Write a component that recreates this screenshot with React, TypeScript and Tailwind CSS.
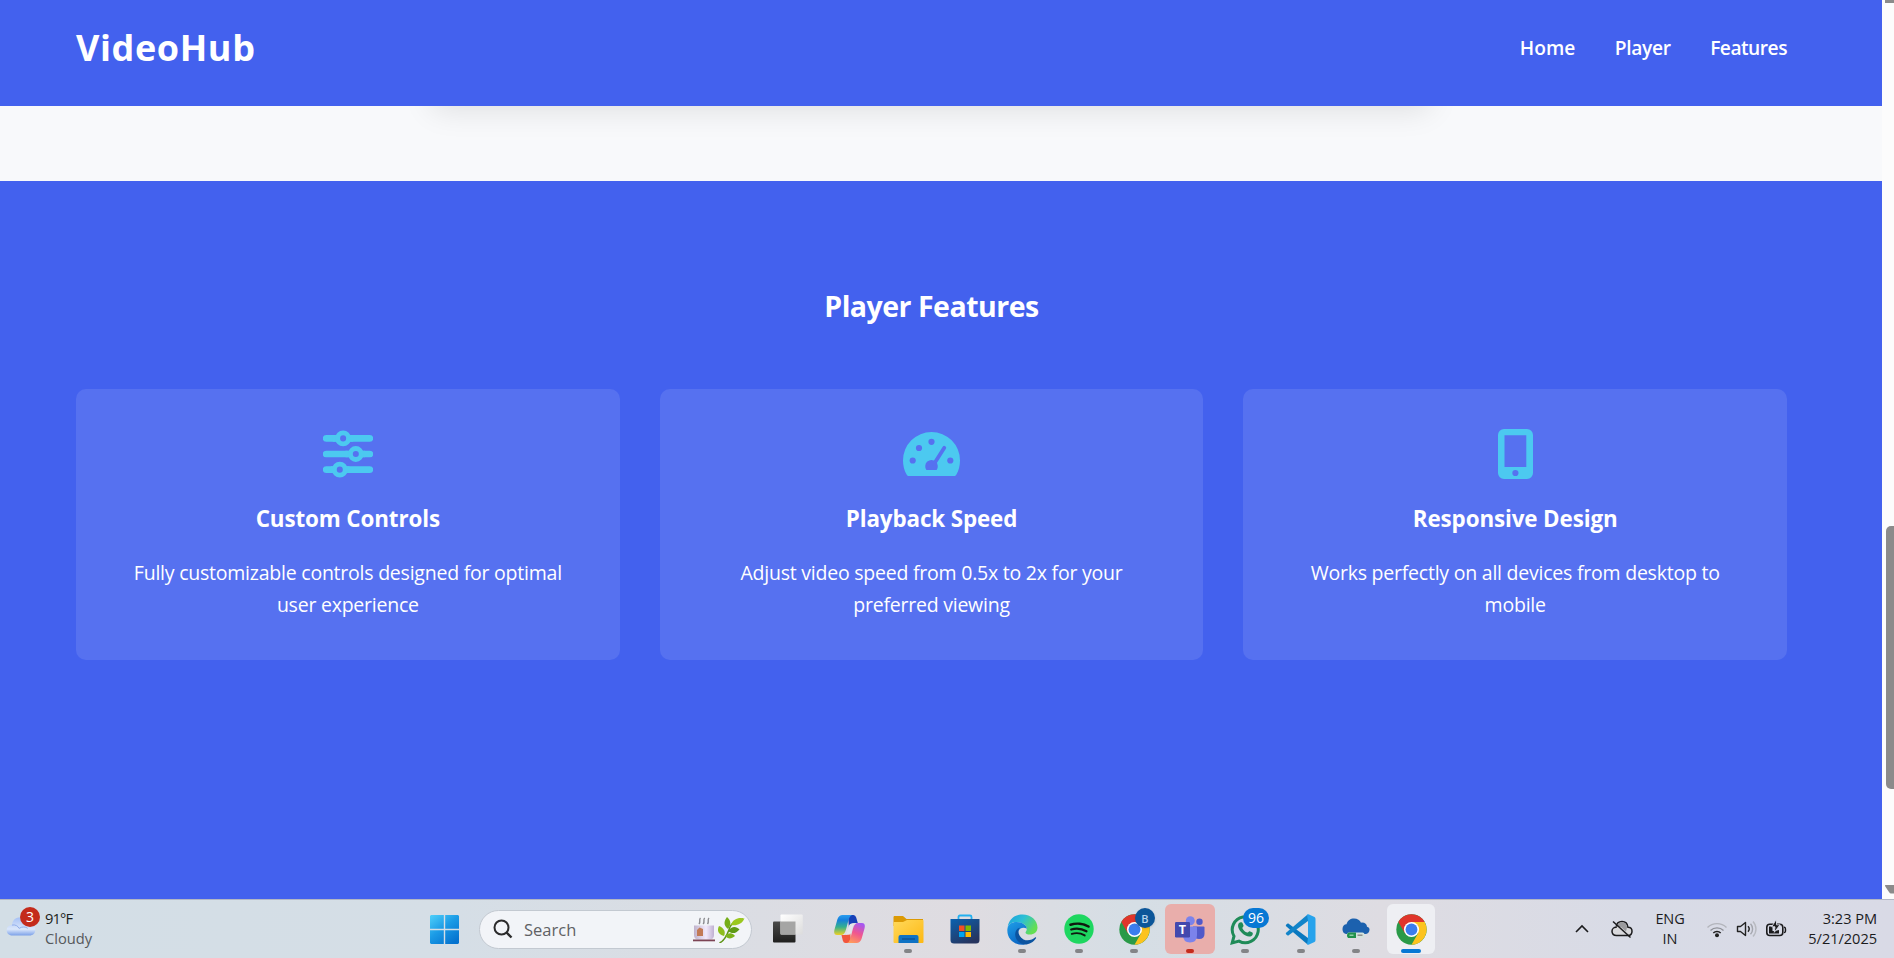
import type { ReactNode } from "react";

function SlidersIcon() {
  return (
    <svg className="h-[50px] w-[50px]" viewBox="0 0 512 512" fill="none" stroke="#4cc9f0" strokeLinecap="round">
      <path strokeWidth="68" d="M32 96H120M290 96H480M32 256H250M420 256H480M32 416H90M254 416H480" />
      <path strokeWidth="68" strokeLinecap="butt" d="M100 96H148M264 96H310M230 256H278M394 256H430M80 416H114M230 416H270" />
      <circle cx="206" cy="96" r="56" strokeWidth="50" />
      <circle cx="336" cy="256" r="56" strokeWidth="50" />
      <circle cx="172" cy="416" r="56" strokeWidth="50" />
    </svg>
  );
}

function GaugeIcon() {
  return (
    <svg className="h-[44px] w-[57px]" viewBox="0 0 57 44">
      <path d="M28.500 0A28.500 28.500 0 0 0 0 28.500C0 33.700 1.300 38.600 3.600 42.500C4.200 43.500 5 44 6.300 44H50.700C52 44 52.800 43.500 53.400 42.500C55.700 38.600 57 33.700 57 28.500A28.500 28.500 0 0 0 28.500 0Z" fill="#4cc9f0" />
      <g fill="#5671f0">
        <circle cx="9.700" cy="28.500" r="3.100" />
        <circle cx="16" cy="16" r="3.100" />
        <circle cx="28.500" cy="9.800" r="3.100" />
        <circle cx="47.300" cy="28.500" r="3.100" />
        <path d="M23.400 38A6.300 6.300 0 1 1 33.600 38Z" />
      </g>
      <path d="M41.300 15.800L31 32" stroke="#5671f0" strokeWidth="3.800" strokeLinecap="round" />
    </svg>
  );
}

function MobileIcon() {
  return (
    <svg className="h-[50px] w-[35px]" viewBox="0 0 35 50">
      <path
        fill="#4cc9f0"
        fillRule="evenodd"
        d="M6 0H29A6 6 0 0 1 35 6V44A6 6 0 0 1 29 50H6A6 6 0 0 1 0 44V6A6 6 0 0 1 6 0ZM6.5 6.3V38H28.3V6.3ZM17.4 40.9A3.1 3.1 0 1 0 17.4 47.1A3.1 3.1 0 1 0 17.4 40.9Z"
      />
    </svg>
  );
}

function Card({ icon, title, text }: { icon: ReactNode; title: string; text: string }) {
  return (
    <div className="flex flex-1 flex-col items-center rounded-[10px] bg-white/10 px-12 pt-10 pb-8 text-center">
      <div className="flex h-[50px] flex-none items-center">{icon}</div>
      <h3 className="mt-[22px] h-9 flex-none text-[22.4px] leading-9 font-bold tracking-[-0.12px]">{title}</h3>
      <p className="mt-5 flex-none text-[19.5px] leading-8 tracking-[-0.23px] text-white">{text}</p>
    </div>
  );
}

function StartIcon() {
  return (
    <svg className="h-[29px] w-[29px]" viewBox="0 0 29 29">
      <defs>
        <linearGradient id="start" gradientUnits="userSpaceOnUse" x1="0" y1="0" x2="22" y2="29">
          <stop offset="0" stopColor="#4fd0fa" />
          <stop offset=".5" stopColor="#1b9be6" />
          <stop offset="1" stopColor="#0573cf" />
        </linearGradient>
      </defs>
      <path fill="url(#start)" d="M1 0H13.8V13.8H0V1ZM15.2 0H28L29 1V13.8H15.2ZM0 15.2H13.8V29H1L0 28ZM15.2 15.2H29V28L28 29H15.2Z" />
    </svg>
  );
}

function TeaIcon() {
  return (
    <svg className="h-[27px] w-[53px]" viewBox="0 0 53 27">
      <defs>
        <linearGradient id="cup" x1="0" y1="0" x2="1" y2="0">
          <stop offset="0" stopColor="#bfb2cc" />
          <stop offset=".6" stopColor="#f1e9fb" />
          <stop offset="1" stopColor="#c0b0d2" />
        </linearGradient>
      </defs>
      <g fill="none" stroke="#8b8b90" strokeWidth="1.4">
        <path d="M8.500 2C6.500 4 9 5 7 8M12.700 2C10.700 4 13.200 5 11.200 8M17 2C15 4 17.500 5 15.500 8" />
      </g>
      <path d="M2 9.500H22V19Q22 23.500 17 23.500H7Q2 23.500 2 19Z" fill="url(#cup)" />
      <path d="M5 14L7.500 11.500L11 13V20H5Z" fill="#c27a56" />
      <path d="M1 23.500H23V25.300H1Z" fill="#7c4455" />
      <path d="M27.500 27C34 24 36 16 38 11C40 7 45 4 51 3" fill="none" stroke="#5d9416" strokeWidth="1.500" />
      <path d="M36 13C31 9 32 5 35 1C39.500 5 39 9 36 13Z" fill="#75ad19" />
      <path d="M39 9C41 2.500 47 1 52.500 2.500C50 8 45 10 39 9Z" fill="#9bc81f" />
      <path d="M32 20C25.500 18 25 14 27 10C32 12 34 16 32 20Z" fill="#8dbd1c" />
      <path d="M36 15C40 9.500 44.500 10.500 47.500 13.500C43.500 18 40 18 36 15Z" fill="#5e9a16" />
      <path d="M33 20C37 16 40.500 17 43 20C39 23.500 36 23 33 20Z" fill="#7cb31a" />
    </svg>
  );
}

function TaskViewIcon() {
  return (
    <svg className="h-[30px] w-[30px]" viewBox="0 0 30 30">
      <defs>
        <linearGradient id="tv1" x1="0" y1="0" x2="0" y2="1">
          <stop offset="0" stopColor="#4a4a49" />
          <stop offset="1" stopColor="#1f1f1e" />
        </linearGradient>
        <linearGradient id="tv2" x1="0" y1="0" x2="1" y2="1">
          <stop offset="0" stopColor="#ffffff" />
          <stop offset="1" stopColor="#dcdcdc" />
        </linearGradient>
      </defs>
      <rect x="0" y="7.500" width="22.500" height="21" rx="1" fill="url(#tv1)" />
      <rect x="7.500" y=".5" width="22.300" height="20" rx="1" fill="url(#tv2)" />
      <rect x="7.500" y="7.500" width="15" height="13" fill="#a5a5a4" />
    </svg>
  );
}

function CopilotIcon() {
  return (
    <svg className="h-[28px] w-[31px]" viewBox="0 0 31 28">
      <defs>
        <linearGradient id="cp1" x1="0" y1="0" x2="0" y2="1">
          <stop offset="0" stopColor="#2a9df0" />
          <stop offset=".25" stopColor="#1580dc" />
          <stop offset=".6" stopColor="#35b08e" />
          <stop offset="1" stopColor="#f0d022" />
        </linearGradient>
        <linearGradient id="cp2" x1=".7" y1="0" x2=".3" y2="1">
          <stop offset="0" stopColor="#a558f2" />
          <stop offset=".5" stopColor="#f0568f" />
          <stop offset="1" stopColor="#ff9a5c" />
        </linearGradient>
      </defs>
      <path d="M14 0H19.500Q21.500 0 22.200 2.500L23.800 8H20Q17.500 8 16.500 10L15 14Z" fill="#1640b8" />
      <path d="M17 28H11.500Q9.500 28 8.800 25.500L7.500 20H11Q13.500 20 14.500 18L16 14Z" fill="#f2553c" />
      <path d="M8.500 0H18Q15.800 .8 14.800 4L12 14.500Q10.500 20 7 20H3Q-.8 20 .5 14.500L3.500 4Q5 0 8.500 0Z" fill="url(#cp1)" />
      <path d="M22.500 28H13Q15.200 27.200 16.200 24L19 13.500Q20.500 8 24 8H28Q31.800 8 30.500 13.500L27.500 24Q26 28 22.500 28Z" fill="url(#cp2)" />
      <path d="M17.800 8.500H20.500Q19.200 9.700 18.500 12L16.800 18.500Q16.200 19.800 14.500 19.800H11.500Q12.800 18.500 13.300 16.500L15 10.500Q15.800 8.500 17.800 8.500Z" fill="#e3e4ea" />
    </svg>
  );
}

function FolderIcon() {
  return (
    <svg className="h-[27px] w-[31px]" viewBox="0 0 31 27">
      <defs>
        <linearGradient id="fd" x1="0" y1="0" x2="1" y2="1">
          <stop offset="0" stopColor="#ffd95b" />
          <stop offset="1" stopColor="#fdb813" />
        </linearGradient>
      </defs>
      <path d="M1 0H10L13.500 3H30V10H.5V1Z" fill="#dc9a04" />
      <path d="M.5 6H10L14 4H30Q30.500 4 30.500 5V26Q30.500 27 29.500 27H1.500Q.5 27 .5 26Z" fill="url(#fd)" />
      <path d="M5.500 27V21Q5.500 19 7.500 19H23.500Q25.500 19 25.500 21V27Z" fill="#0f72c4" />
      <path d="M9 23H22" stroke="#0a4d90" strokeWidth="1.200" />
    </svg>
  );
}

function StoreIcon() {
  return (
    <svg className="h-[30px] w-[30px]" viewBox="0 0 30 30">
      <defs>
        <linearGradient id="st" x1="0" y1="0" x2=".6" y2="1">
          <stop offset="0" stopColor="#0a62b0" />
          <stop offset="1" stopColor="#27355f" />
        </linearGradient>
      </defs>
      <path d="M8.500 6V3Q8.500 1.500 10 1.500H20Q21.500 1.500 21.500 3V6" fill="none" stroke="#22b0f0" strokeWidth="1.800" />
      <path d="M.5 5H29.500V26Q29.500 29.500 26 29.500H4Q.5 29.500 .5 26Z" fill="url(#st)" />
      <path d="M9 11.500H14.500V17H9Z" fill="#f25022" />
      <path d="M15.500 11.500H21V17H15.500Z" fill="#7fba00" />
      <path d="M9 18H14.500V23H9Z" fill="#00a4ef" />
      <path d="M15.500 18H21V23H15.500Z" fill="#ffb900" />
    </svg>
  );
}

function EdgeIcon() {
  return (
    <svg className="h-[31px] w-[31px]" viewBox="0 0 31 31">
      <defs>
        <linearGradient id="eg1" x1="0" y1="0" x2="1" y2=".5">
          <stop offset="0" stopColor="#1a9ede" />
          <stop offset=".5" stopColor="#2cbfd5" />
          <stop offset="1" stopColor="#64df53" />
        </linearGradient>
        <linearGradient id="eg2" x1="0" y1="0" x2=".5" y2="1">
          <stop offset="0" stopColor="#1f9fe8" />
          <stop offset="1" stopColor="#0a66c4" />
        </linearGradient>
      </defs>
      <path d="M.6 13C2 5 8 .4 15.500 .4C24 .4 30.500 6 30.500 13.500C30.500 18 27 20.500 23 20.500C20 20.500 18.500 19.500 18.500 18.700C18.500 18 19.800 17 19.800 14.800C19.800 11 15 8 9.500 8C5 8 1.800 10 .6 13Z" fill="url(#eg1)" />
      <path d="M.4 15C.8 10.500 4.500 8 9.500 8C15.500 8 19.800 11.500 19.800 14.800C17 12.500 12 14 11 18C9.800 23 13 29 18 30.400C8 32 -.5 25 .4 15Z" fill="url(#eg2)" />
      <path d="M13.500 13.500C10 15.500 11 22.500 16.500 25.500C21 27.500 26 25.500 28 23.500C29 22.700 29.500 23.500 28.800 24.500C26.500 28 22.500 30.500 17.800 30.600C11 29.500 7.500 24 8.300 19C9 15.500 11 14 13.500 13.500Z" fill="#0c54a0" />
    </svg>
  );
}

function SpotifyIcon() {
  return (
    <svg className="h-[30px] w-[30px]" viewBox="0 0 30 30">
      <circle cx="15" cy="15" r="14.700" fill="#1ed760" />
      <g fill="none" stroke="#10180f" strokeLinecap="round">
        <path d="M6.500 10.700C12 9 19.500 9.500 24.500 12.500" strokeWidth="2.600" />
        <path d="M7.200 15.500C12 14 18 14.700 22.500 17.300" strokeWidth="2.200" />
        <path d="M7.800 19.900C12 18.700 17 19.200 20.700 21.400" strokeWidth="1.900" />
      </g>
    </svg>
  );
}

function ChromeIcon() {
  return (
    <svg className="h-[31px] w-[31px]" viewBox="0 0 48 48">
      <circle cx="24" cy="24" r="23.500" fill="#2a9a48" />
      <path d="M44.350 12.250A23.500 23.500 0 0 1 24 47.500L34.200 29.800L33 12.250Z" fill="#fcc31e" />
      <path d="M24 12.250H44.350V24H24Z" fill="#fcc31e" />
      <path d="M3.650 12.250L13.800 29.900L24 24V12.250H44.350A23.500 23.500 0 0 0 3.650 12.250Z" fill="#e0352b" />
      <circle cx="24" cy="24" r="11.700" fill="#fff" />
      <circle cx="24" cy="24" r="9.200" fill="#3b7ded" />
    </svg>
  );
}

function TeamsIcon() {
  return (
    <svg className="h-[27px] w-[31px]" viewBox="0 0 31 27">
      <circle cx="25.500" cy="5.700" r="3.200" fill="#5059c9" />
      <path d="M19 10.500H29.500Q30.500 10.500 30.500 11.500V18Q30.500 23 25 23Q21 23 19 20Z" fill="#5059c9" />
      <circle cx="16.300" cy="4.700" r="4.500" fill="#7b83eb" />
      <path d="M9 10.500H22Q23 10.500 23 11.500V19Q23 26.500 16 26.500Q9 26.500 9 19Z" fill="#7b83eb" />
      <rect x="1" y="6" width="15" height="15.500" rx="1.200" fill="#4349ae" />
      <text x="8.400" y="18.300" textAnchor="middle" fill="#fff" className="font-['Open_Sans',sans-serif] text-[12.5px] font-bold">T</text>
    </svg>
  );
}

function WhatsAppIcon() {
  return (
    <svg className="h-[31px] w-[31px]" viewBox="0 0 31 31">
      <path d="M2.200 28.900L4 22.200A13 13 0 1 1 9 27.100Z" fill="none" stroke="#1f8b58" strokeWidth="3" />
      <path d="M10.800 8.300C11.700 8 12.300 8.500 12.600 9.300L13.500 11.500C13.800 12.500 12.200 13.500 12.400 14.200C13.500 16.300 15 17.700 17.200 18.600C18 18.800 18.900 16.900 19.700 17.200L22.400 18.500C23.300 19.100 22.700 21.200 21.500 22C19 23.500 15 22 12 19C9 16 7.300 12.500 8.400 10C8.900 9 9.700 8.500 10.800 8.300Z" fill="#1f8b58" />
    </svg>
  );
}

function VSCodeIcon() {
  return (
    <svg className="h-[31px] w-[31px]" viewBox="0 0 31 31">
      <path d="M1 10.800L3 9.200L23 24V30.500L22 30L.8 12Z" fill="#0a78bf" />
      <path d="M1 20.200L3 21.800L23 7V.5L22 1L.8 19Z" fill="#1284c9" />
      <path d="M22 .8Q23 0 24 .5L29.500 3Q30.500 3.500 30.500 5V26Q30.500 27.500 29.500 28L24 30.500Q23 31 22 30.200L23 24V7Z" fill="#27a3ec" />
    </svg>
  );
}

function CloudServerIcon() {
  return (
    <svg className="h-[22px] w-[28px]" viewBox="0 0 28 22">
      <path d="M5.500 16C2 16 .5 14 .5 11C.5 8 2.500 6.200 4.500 6.300C5.500 2.500 8.500 .5 12 .5C15.500 .5 18 2.300 19 4.700C22.500 4.200 25 6.200 25 8.700C27 9.200 27.700 10.500 27.500 12C27.200 14.500 25.500 16 23.500 16Z" fill="#1c61ae" />
      <rect x="5" y="14.500" width="17.500" height="5.500" rx="2" fill="#d5e4dd" />
      <path d="M7 14.500H14V20H7Q5 20 5 17.200Q5 14.500 7 14.500Z" fill="#20924c" />
      <path d="M7.500 17.200H11.500" stroke="#a9dcbc" strokeWidth="1.200" />
      <path d="M15.500 17.200H20.500" stroke="#888" strokeWidth="1.400" />
    </svg>
  );
}

function AppTile({
  children,
  tile = "",
  dot = "",
}: {
  children: ReactNode;
  tile?: string;
  dot?: string;
}) {
  return (
    <div className={`relative flex h-[50px] flex-none items-center justify-center rounded-md ${tile || "w-[50px]"}`}>
      {children}
      {dot && <span className={`absolute bottom-[1px] left-1/2 h-1 -translate-x-1/2 rounded-full ${dot}`} />}
    </div>
  );
}

const GRAY_DOT = "w-2 bg-[#838487]";

function Weather() {
  return (
    <div className="flex w-[430px] flex-none items-center pl-1.5">
      <div className="relative h-[30px] w-[30px]">
        <svg className="mt-[2px] h-[20px] w-[30px]" viewBox="0 0 30 21">
          <defs>
            <linearGradient id="cl" x1="0" y1="0" x2="0" y2="1">
              <stop offset="0" stopColor="#a6c0f5" />
              <stop offset=".65" stopColor="#dbe7fb" />
              <stop offset="1" stopColor="#7ba0e8" />
            </linearGradient>
          </defs>
          <path d="M6 20.500C2 20.500 0 18 0 15C0 12 2 9.500 5.500 9.500C6 4 9.500 1.500 13.500 1.500C18 1.500 20.500 4 21.500 8C27 7.500 30 10.500 30 14.500C30 18.500 27.500 20.500 24 20.500Z" fill="url(#cl)" />
          <path d="M5.500 9.500C9 8.800 12 10.500 13 13C16 11 20 11 22 13" fill="none" stroke="#8eace9" strokeWidth="1" />
        </svg>
        <span className="absolute -top-[7px] left-[14px] flex h-5 w-5 items-center justify-center rounded-full bg-[#c42b1c] text-[14px] leading-none text-white">
          3
        </span>
      </div>
      <div className="mb-0.5 ml-[9px] text-[14.7px] leading-5">
        <div className="tracking-[-0.9px] text-[#1c1e20]">91°F</div>
        <div className="text-[#56595c]">Cloudy</div>
      </div>
    </div>
  );
}

function Tray() {
  return (
    <div className="ml-auto flex h-full items-center pr-[17px] text-[#1b1b1d]">
      <svg className="h-3 w-3.5" viewBox="0 0 14 12" fill="none" stroke="currentColor" strokeWidth="1.600">
        <path d="M1 9L7 3L13 9" />
      </svg>
      <svg className="ml-[22px] h-5 w-[22px]" viewBox="0 0 22 20">
        <path d="M5.500 16.500C2.500 16.500 1 14.500 1 12.300C1 10 2.800 8.300 5 8.300C5.500 4.500 8 2.500 11 2.500C14 2.500 16.500 4.500 17 8.300C19.500 8.300 21 10 21 12.300C21 14.800 19.300 16.500 17 16.500Z" fill="#d9d9dc" stroke="currentColor" strokeWidth="1.500" />
        <path d="M5.500 8C6 5 8.500 3.300 11 3.300C13.500 3.300 15.700 5 16.200 8L15 12.500L10 8Z" fill="#9b9b9e" />
        <path d="M2 2.500L19.500 18.500" stroke="currentColor" strokeWidth="1.500" />
      </svg>
      <div className="ml-[22px] w-[30px] text-center text-[14.5px] leading-5 tracking-[-0.1px]">
        <div>ENG</div>
        <div>IN</div>
      </div>
      <svg className="ml-[21px] h-5 w-[22px]" viewBox="0 0 22 20" fill="none">
        <path d="M1.500 8.500A13.500 13.500 0 0 1 20.500 8.500" stroke="#b3b5bc" strokeWidth="1.400" />
        <path d="M4.500 11.500A9.300 9.300 0 0 1 17.500 11.500" stroke="#8f9198" strokeWidth="1.400" />
        <path d="M7.300 14A5.300 5.300 0 0 1 14.700 14" stroke="#222" strokeWidth="1.500" />
        <circle cx="11" cy="16.200" r="2" fill="#222" />
      </svg>
      <svg className="ml-[8px] h-5 w-[22px]" viewBox="0 0 22 20" fill="none" strokeWidth="1.400">
        <path d="M1.500 7.500H4.500L9.500 3.500V16.500L4.500 12.500H1.500Z" stroke="#222" strokeLinejoin="round" />
        <path d="M12 7.300A4 4 0 0 1 12 12.700" stroke="#222" />
        <path d="M14.500 4.800A7.500 7.500 0 0 1 14.500 15.200" stroke="#a3a5ac" />
        <path d="M17 2.500A11 11 0 0 1 17 17.500" stroke="#b8bac0" />
      </svg>
      <svg className="ml-[7px] h-5 w-[22px]" viewBox="0 0 22 20" fill="none">
        <rect x="1.800" y="5.200" width="16" height="11.300" rx="3" stroke="#1b1b1d" strokeWidth="1.600" />
        <path d="M19 8.300C20.500 8.300 20.500 9 20.500 11C20.500 13 20.500 13.500 19 13.500" stroke="#1b1b1d" strokeWidth="1.500" />
        <path d="M4 7.500H7.500V12H10L14 11V14.500H4Z" fill="#1b1b1d" />
        <path d="M11.500 0L6.700 7.800H10L9.300 13.300L15 5.800H11.500Z" fill="#1b1b1d" stroke="#d9dbe6" strokeWidth=".9" />
      </svg>
      <div className="mb-0.5 ml-[20px] w-[70px] text-right text-[14.6px] leading-5 tracking-[-0.05px] whitespace-nowrap">
        <div>3:23 PM</div>
        <div>5/21/2025</div>
      </div>
    </div>
  );
}

function Taskbar() {
  return (
    <footer className="flex h-[59px] items-center border-t border-[#b3b7c4] bg-[linear-gradient(90deg,#d3dee6_0%,#d5dee6_24%,#dfdce1_51%,#d5dee5_60%,#dedce2_73%,#d8dbe6_86%,#d9dae6_100%)] text-[#1c1e20]">
      <Weather />
      <StartIcon />
      <div className="ml-5 flex h-[39px] w-[273px] flex-none items-center rounded-full border border-[#c3c9d1] bg-[#f2f4f8] pr-1.5 pl-[13px]">
        <svg className="h-5 w-5" viewBox="0 0 20 20" fill="none" stroke="#2b2b2c" strokeWidth="2">
          <circle cx="8.500" cy="8.500" r="7" />
          <path d="M13.500 13.500L18.500 18.500" strokeWidth="2.400" />
        </svg>
        <span className="ml-[11px] pt-[2px] text-[16.5px] text-[#5f6164]">Search</span>
        <span className="ml-auto"><TeaIcon /></span>
      </div>
      <div className="ml-[11px] flex items-center">
        <AppTile><TaskViewIcon /></AppTile>
        <div className="ml-[11px]"><AppTile><CopilotIcon /></AppTile></div>
        <div className="ml-[9px] flex items-center gap-[7px]">
          <AppTile dot={GRAY_DOT}><FolderIcon /></AppTile>
          <AppTile><StoreIcon /></AppTile>
          <AppTile dot={GRAY_DOT}><EdgeIcon /></AppTile>
          <AppTile dot={GRAY_DOT}><SpotifyIcon /></AppTile>
        </div>
        <div className="ml-[5px] flex items-center gap-[5.5px]">
          <AppTile dot={GRAY_DOT}>
            <ChromeIcon />
            <span className="absolute top-1 right-[4px] flex h-5 w-5 items-center justify-center rounded-full bg-[#0b5699] text-[11px] leading-none font-semibold text-[#b5d2ec] shadow">
              B
            </span>
          </AppTile>
          <AppTile tile="w-[50px] bg-[#e9aeab]" dot="w-2 bg-[#c42b1c]"><TeamsIcon /></AppTile>
          <AppTile dot={GRAY_DOT}>
            <WhatsAppIcon />
            <span className="absolute top-1 left-[23px] flex h-5 w-[26px] items-center justify-center rounded-full bg-[#0778d4] text-[14px] leading-none text-white">
              96
            </span>
          </AppTile>
          <AppTile dot={GRAY_DOT}><VSCodeIcon /></AppTile>
          <AppTile dot={GRAY_DOT}><CloudServerIcon /></AppTile>
        </div>
        <div className="ml-[6px]">
          <AppTile tile="w-[48px] bg-[#eeeff3]" dot="w-5 bg-[#0778d4]"><ChromeIcon /></AppTile>
        </div>
      </div>
      <Tray />
    </footer>
  );
}

function Scrollbar() {
  return (
    <div className="flex w-3 flex-none flex-col items-end overflow-hidden bg-[#fcfcfc]">
      <div className="h-[3px] w-[9px] bg-[#8b8b8b]" />
      <div className="mt-[523px] h-[263px] w-2 rounded-l-[5px] bg-[#8b8b8b]" />
      <svg className="mt-auto mb-[5px] h-[9px] w-[9px] flex-none" viewBox="0 0 9 9">
        <path d="M0 0H9V8.500H6Q5 8.500 4 7L.3 1.500Z" fill="#8b8b8b" />
      </svg>
    </div>
  );
}

export default function App() {
  return (
    <div className="flex h-[958px] w-[1894px] flex-col overflow-hidden font-['Open_Sans','Noto_Sans',sans-serif]">
      <div className="flex h-[899px] flex-none text-white">
        <div className="flex w-[1882px] flex-col">
          <header className="h-[106px] flex-none bg-[#4361ee] pr-[95px] pl-[76px]">
            <div className="flex h-[96px] items-center justify-between">
              <div className="text-[36px] font-bold tracking-[0.6px]">VideoHub</div>
              <nav className="flex gap-[39.500px] pt-[1px] text-[19.200px] font-semibold">
                <a className="tracking-[0px]">Home</a>
                <a className="tracking-[-0.35px]">Player</a>
                <a className="tracking-[-0.5px]">Features</a>
              </nav>
            </div>
          </header>
          <div className="flex h-[75px] flex-none overflow-hidden bg-[#f8f9fb] pl-[431px]">
            <div className="-mt-[85px] h-20 w-[1000px] rounded-[10px] shadow-[0_10px_30px_rgba(0,0,0,0.1)]" />
          </div>
          <section className="flex-1 bg-[#4361ee] pt-[103px] pr-[95px] pl-[76px]">
            <h2 className="h-11 text-center text-[28.500px] leading-[44px] font-bold tracking-[-0.5px]">Player Features</h2>
            <div className="mt-[61px] flex h-[271px] gap-10">
              <Card icon={<SlidersIcon />} title="Custom Controls" text="Fully customizable controls designed for optimal user experience" />
              <Card icon={<GaugeIcon />} title="Playback Speed" text="Adjust video speed from 0.5x to 2x for your preferred viewing" />
              <Card icon={<MobileIcon />} title="Responsive Design" text="Works perfectly on all devices from desktop to mobile" />
            </div>
          </section>
        </div>
        <Scrollbar />
      </div>
      <Taskbar />
    </div>
  );
}
